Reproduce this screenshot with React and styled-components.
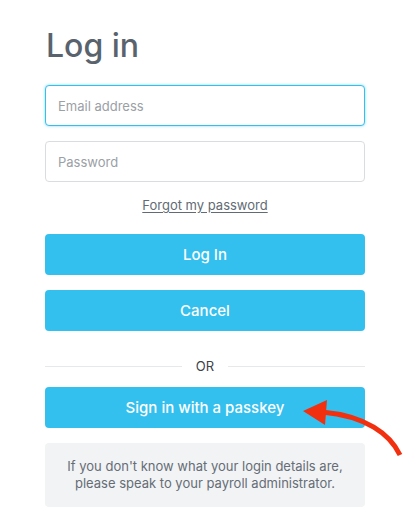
import React from 'react'
import styled, { createGlobalStyle } from 'styled-components'

const GlobalStyle = createGlobalStyle`
  html, body {
    margin: 0;
    padding: 0;
    background: #ffffff;
    font-family: "Inter", "Lato", sans-serif;
  }
`

const Page = styled.div`
  position: relative;
  width: 416px;
  height: 522px;
  overflow: hidden;
  box-sizing: border-box;
  padding: 23px 51px 0 45px;
`

const Title = styled.h1`
  margin: 0 0 17px 1px;
  font-size: 32px;
  line-height: 45px;
  font-weight: 500;
  color: #59636d;
`

const Stack = styled.div`
  display: flex;
  flex-direction: column;
  gap: 15px;
`

const Input = styled.input`
  box-sizing: border-box;
  width: 100%;
  height: 41px;
  padding: 0 12px;
  border: 1px solid ${p => (p.$focused ? '#35bfee' : '#d9dde0')};
  border-radius: 4px;
  box-shadow: ${p => (p.$focused ? '0 0 3px rgba(53,191,238,0.6)' : 'none')};
  font-family: inherit;
  font-size: 13px;
  color: #333;
  outline: none;
  &::placeholder {
    color: #9aa0a6;
  }
`

const LinkRow = styled.div`
  display: flex;
  justify-content: center;
  padding: 14px 0 20px;
`

const Link = styled.a`
  font-size: 13px;
  line-height: 18px;
  color: #626b74;
  text-decoration: underline;
  text-underline-offset: 2px;
  cursor: pointer;
`

const Button = styled.button`
  box-sizing: border-box;
  width: 100%;
  height: 41px;
  border: none;
  border-radius: 4px;
  background: #33c0ef;
  color: #ffffff;
  font-family: inherit;
  font-size: 15px;
  font-weight: 500;
  cursor: pointer;
`

const Divider = styled.div`
  display: flex;
  align-items: center;
  gap: 14px;
  margin: 24px 0 10px;
  font-size: 13px;
  line-height: 22px;
  color: #3c434a;
  &::before, &::after {
    content: '';
    flex: 1;
    height: 1px;
    background: #e6e8ea;
  }
`

const InfoBox = styled.div`
  box-sizing: border-box;
  height: 64px;
  display: flex;
  align-items: center;
  justify-content: center;
  text-align: center;
  background: #f2f3f5;
  border-radius: 4px;
  font-size: 13px;
  line-height: 17px;
  color: #656d75;
`

const Arrow = styled.svg`
  position: absolute;
  left: 0;
  top: 0;
  pointer-events: none;
`

export default function App() {
  return (
    <Page>
      <GlobalStyle />
      <Title>Log in</Title>
      <Stack>
        <Input type="email" placeholder="Email address" $focused />
        <Input type="password" placeholder="Password" />
      </Stack>
      <LinkRow>
        <Link>Forgot my password</Link>
      </LinkRow>
      <Stack>
        <Button>Log In</Button>
        <Button>Cancel</Button>
      </Stack>
      <Divider>OR</Divider>
      <Stack>
        <Button>Sign in with a passkey</Button>
        <InfoBox>
          If you don't know what your login details are,<br />
          please speak to your payroll administrator.
        </InfoBox>
      </Stack>
      <Arrow width="416" height="522" viewBox="0 0 416 522">
        <path d="M400 455 C 390 434, 366 416, 322 412" fill="none" stroke="#f2300f" strokeWidth="5" strokeLinecap="butt" />
        <polygon points="303,411 327,400 325,425" fill="#f2300f" />
      </Arrow>
    </Page>
  )
}
